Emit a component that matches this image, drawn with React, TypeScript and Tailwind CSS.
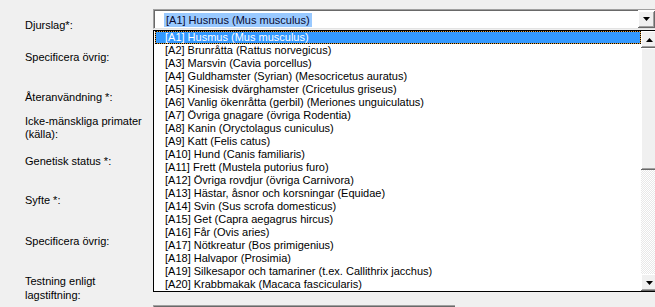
import React from 'react';

const SPECIES = [
  '[A1] Husmus (Mus musculus)',
  '[A2] Brunråtta (Rattus norvegicus)',
  '[A3] Marsvin (Cavia porcellus)',
  '[A4] Guldhamster (Syrian) (Mesocricetus auratus)',
  '[A5] Kinesisk dvärghamster (Cricetulus griseus)',
  '[A6] Vanlig ökenråtta (gerbil) (Meriones unguiculatus)',
  '[A7] Övriga gnagare (övriga Rodentia)',
  '[A8] Kanin (Oryctolagus cuniculus)',
  '[A9] Katt (Felis catus)',
  '[A10] Hund (Canis familiaris)',
  '[A11] Frett (Mustela putorius furo)',
  '[A12] Övriga rovdjur (övriga Carnivora)',
  '[A13] Hästar, åsnor och korsningar (Equidae)',
  '[A14] Svin (Sus scrofa domesticus)',
  '[A15] Get (Capra aegagrus hircus)',
  '[A16] Får (Ovis aries)',
  '[A17] Nötkreatur (Bos primigenius)',
  '[A18] Halvapor (Prosimia)',
  '[A19] Silkesapor och tamariner (t.ex. Callithrix jacchus)',
  '[A20] Krabbmakak (Macaca fascicularis)',
];

const raised = 'bg-[#f0f0f0] shadow-[inset_-1px_-1px_#696969,inset_1px_1px_#ffffff,inset_-2px_-2px_#a0a0a0,inset_2px_2px_#f0f0f0]';

function Arrow({ up }: { up?: boolean }) {
  return (
    <svg width="7" height="4" viewBox="0 0 7 4">
      <polygon points={up ? '3.5,0 7,4 0,4' : '0,0 7,0 3.5,4'} fill="#000" />
    </svg>
  );
}

export default function App() {
  return (
    <div className="relative h-[307px] w-[655px] overflow-hidden bg-[#f0f0f0] font-['Liberation_Sans',Arial,sans-serif] text-[11px] text-black">
      <div className="flex">
        {/* labels */}
        <div className="flex w-[153px] shrink-0 flex-col pl-[25px] pt-[19px] leading-[13px]">
          <div>Djurslag*:</div>
          <div className="mt-[19px]">Specificera övrig:</div>
          <div className="mt-[27px]">Återanvändning *:</div>
          <div className="mt-[11px]">Icke-mänskliga primater<br />(källa):</div>
          <div className="mt-[14px]">Genetisk status *:</div>
          <div className="mt-[26px]">Syfte *:</div>
          <div className="mt-[28px]">Specificera övrig:</div>
          <div className="mt-[27px] leading-[13.5px]">Testning enligt<br />lagstiftning:</div>
        </div>

        {/* fields */}
        <div className="flex shrink-0 flex-col pt-[9px]">
          <div className="flex h-[20px] w-[504px] items-center border border-b-[#e3e3e3] border-l-[#a0a0a0] border-r-[#e3e3e3] border-t-[#a0a0a0] bg-white">
            <div className="flex h-full flex-1 items-center border-l border-t border-[#696969] pl-[9px]">
              <span className="bg-[#99c9ff] px-[2px] leading-[14px] text-[#0a0a30]">[A1] Husmus (Mus musculus)</span>
            </div>
            <div className={`mr-[1px] flex h-[17px] w-[17px] items-center justify-center ${raised}`}>
              <Arrow />
            </div>
          </div>
          <div className="mt-[276px] h-[20px] w-[302px] border-l border-t border-[#a0a0a0]">
            <div className="h-full border-l border-t border-[#696969] bg-white" />
          </div>
        </div>
      </div>

      {/* open dropdown list */}
      <div className="absolute left-[153px] top-[30px] flex h-[262px] w-[506px] border border-black bg-white">
        <div className="flex flex-1 flex-col pl-[1px]">
          {SPECIES.map((s, i) =>
            i === 0 ? (
              <div key={s} className="h-[13px] border border-dotted border-black bg-[#e0a040]">
                <div className="h-full bg-[#3399ff] pl-[9px] leading-[11px] text-white">{s}</div>
              </div>
            ) : (
              <div key={s} className="h-[13px] whitespace-nowrap pl-[10px] leading-[13px]">{s}</div>
            ),
          )}
        </div>
        <div className="flex w-[17px] flex-col">
          <div className={`flex h-[17px] items-center justify-center ${raised}`}>
            <Arrow up />
          </div>
          <div className={`h-[122px] ${raised}`} />
          <div className="flex-1 bg-[repeating-conic-gradient(#ffffff_0_25%,#e8e8e8_0_50%)] bg-[length:2px_2px]" />
          <div className={`flex h-[17px] items-center justify-center ${raised}`}>
            <Arrow />
          </div>
        </div>
      </div>
    </div>
  );
}
